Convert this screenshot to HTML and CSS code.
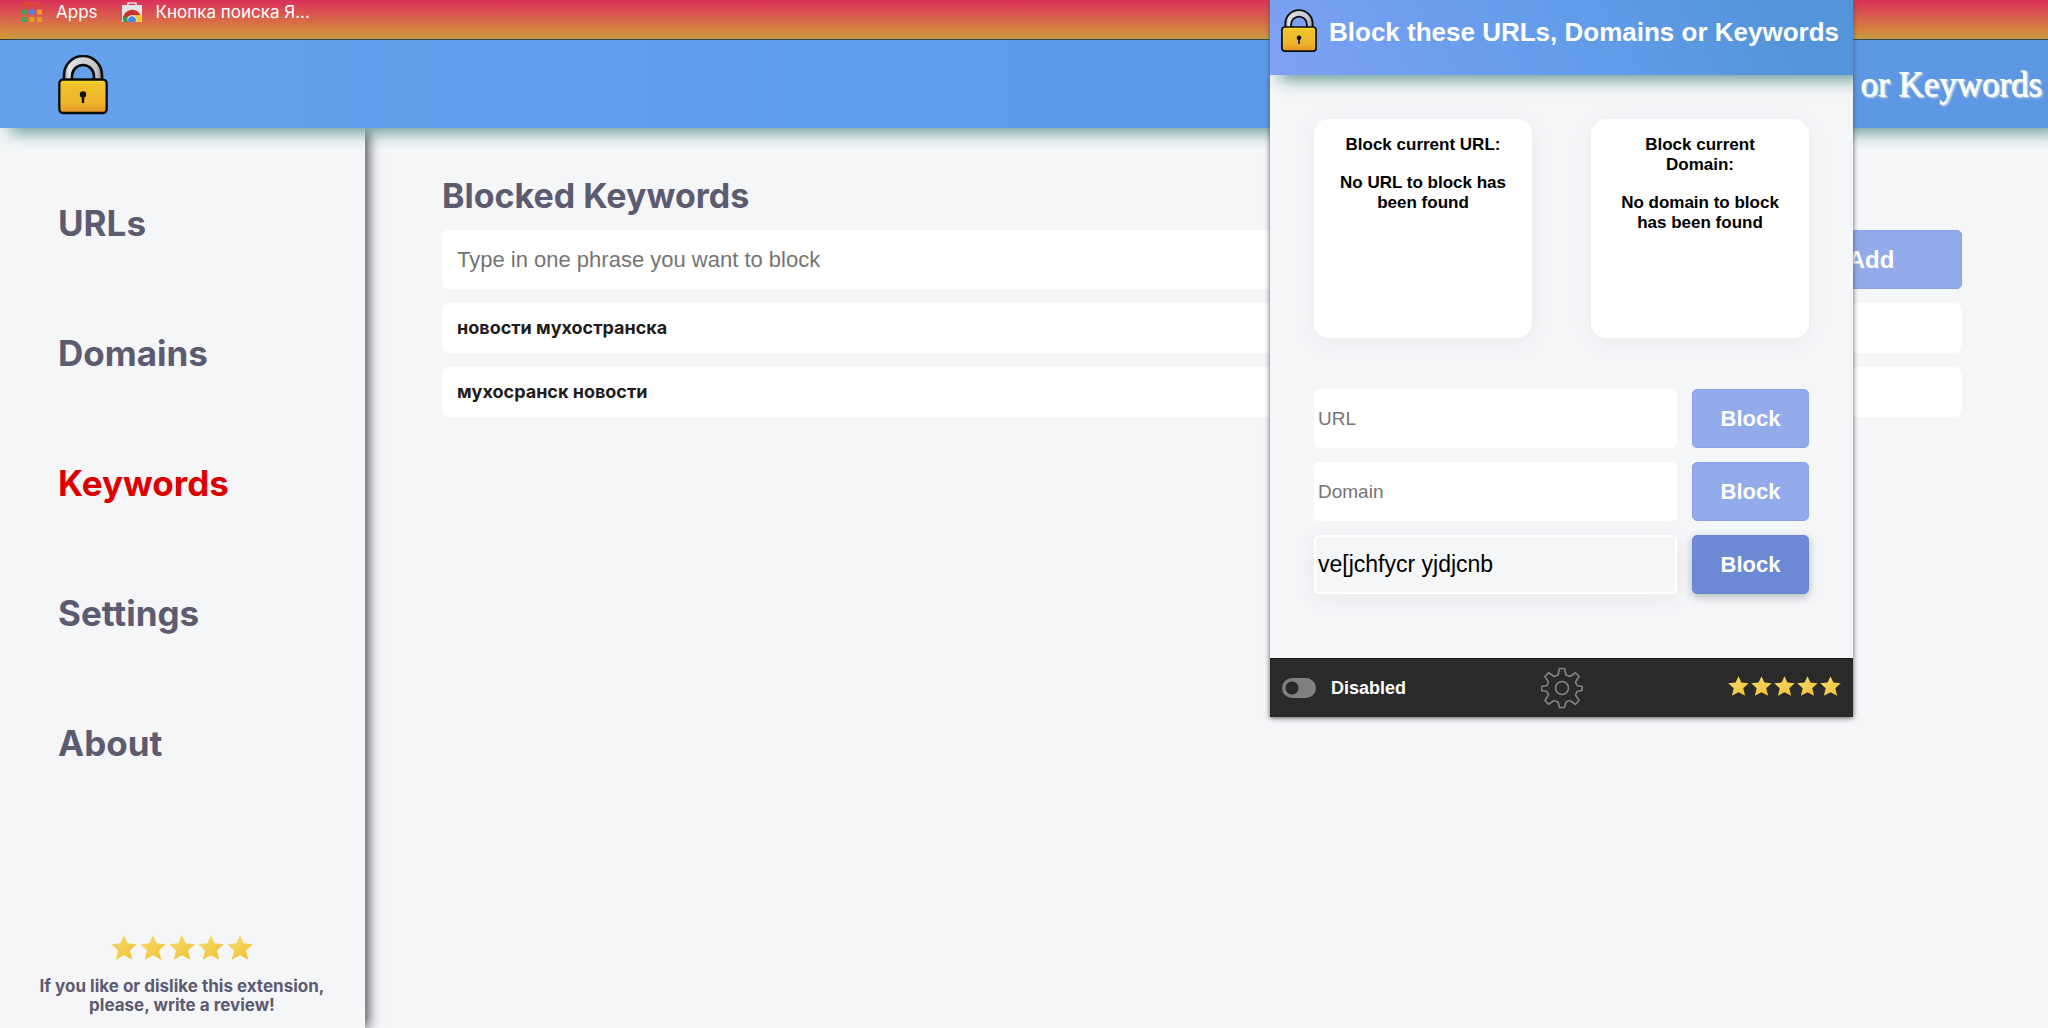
FILE: index.html
```html
<!DOCTYPE html>
<html lang="en">
<head>
<meta charset="utf-8">
<title>Block these URLs, Domains or Keywords</title>
<link rel="stylesheet" href="styles.css">
</head>
<body>
<svg class="defs" aria-hidden="true">
  <defs>
    <linearGradient id="gold" x1="0" y1="0" x2="0" y2="1"><stop offset="0" stop-color="#f5e02f"/><stop offset=".15" stop-color="#efc22c"/><stop offset=".7" stop-color="#edb42b"/><stop offset="1" stop-color="#e2932a"/></linearGradient>
    <linearGradient id="steel" x1="0" y1="0" x2="1" y2="0"><stop offset="0" stop-color="#8f9299"/><stop offset=".12" stop-color="#e2e3e6"/><stop offset=".5" stop-color="#d0d2d7"/><stop offset=".85" stop-color="#c4c6cc"/><stop offset="1" stop-color="#85888f"/></linearGradient>
    <linearGradient id="star-fill" x1="0" y1="0" x2="1" y2="1"><stop offset="0" stop-color="#f8dc72"/><stop offset="1" stop-color="#efc02f"/></linearGradient>
    <symbol id="lock" viewBox="0 0 50 60">
      <path d="M6 30V20a19 19 0 0 1 38 0V30H36V21a11 11 0 0 0-22 0V30z" fill="url(#steel)" stroke="#0c0c0c" stroke-width="2.600"/>
      <rect x="1.300" y="24.500" width="47.400" height="33.500" rx="4" fill="url(#gold)" stroke="#0c0c0c" stroke-width="2.300"/>
      <circle cx="25" cy="39.500" r="3.200" fill="#111"/>
      <path d="M23.800 41h2.400v7h-2.400z" fill="#111"/>
    </symbol>
    <symbol id="star" viewBox="0 0 26 25">
      <path d="M13 .2l3.600 8 9.200 1-6.800 6.200 2.300 9.400L13 20.200 4.700 24.800 7 15.400.2 9.200l9.200-1z" fill="url(#star-fill)"/>
    </symbol>
  </defs>
</svg>

<nav class="bookmarks" aria-label="Bookmarks">
  <a class="bookmark" href="#apps">
    <svg class="bookmark-icon" viewBox="0 0 20 20" aria-hidden="true">
      <path d="M0 0h5v5H0zM7.500 0h5v5h-5zM15 0h5v5h-5z" fill="#d8472f"/>
      <path d="M0 7.500h5v5H0z" fill="#4f9b5a"/><path d="M7.500 7.500h5v5h-5z" fill="#4285f4"/><path d="M15 7.500h5v5h-5z" fill="#dfa01e"/>
      <path d="M0 15h5v5H0z" fill="#4f9b5a"/><path d="M7.500 15h5v5h-5zM15 15h5v5h-5z" fill="#dfa01e"/>
    </svg>
    <span>Apps</span>
  </a>
  <a class="bookmark" href="#store">
    <svg class="bookmark-icon" viewBox="0 0 20 20" aria-hidden="true">
      <path d="M6 3V1h8v2" fill="none" stroke="#e3dfe1" stroke-width="1.500"/>
      <path d="M0 3h20v17H0z" fill="#e4e2e4"/>
      <path d="M1 17a9.200 9.200 0 0 1 17.500-4l-9 1z" fill="#c9302b"/>
      <path d="M1 14a9 9 0 0 0 .5 6H8l-2-4z" fill="#35994b"/>
      <path d="M12 13h7a9 9 0 0 1 0 7h-7z" fill="#f3cb2e"/>
      <circle cx="10" cy="17.500" r="4.600" fill="#e4e2e4"/>
      <path d="M6.400 20a4 4 0 1 1 7.200 0z" fill="#4b83e8"/>
    </svg>
    <span>Кнопка поиска Я...</span>
  </a>
</nav>

<header class="page-header">
  <svg class="page-lock" aria-hidden="true"><use href="#lock"/></svg>
  <h1 class="page-title">Block these URLs, Domains or Keywords</h1>
</header>

<div class="layout">
  <aside class="sidebar">
    <nav class="menu" aria-label="Options">
      <a class="menu-link" href="#urls">URLs</a>
      <a class="menu-link" href="#domains">Domains</a>
      <a class="menu-link menu-link-active" href="#keywords">Keywords</a>
      <a class="menu-link" href="#settings">Settings</a>
      <a class="menu-link" href="#about">About</a>
    </nav>
    <a class="review" href="#review">
      <span class="review-stars">
        <svg class="star"><use href="#star"/></svg><svg class="star"><use href="#star"/></svg><svg class="star"><use href="#star"/></svg><svg class="star"><use href="#star"/></svg><svg class="star"><use href="#star"/></svg>
      </span>
      <span>If you like or dislike this extension,<br>please, write a review!</span>
    </a>
  </aside>

  <main class="content">
    <h2 class="content-title">Blocked Keywords</h2>
    <form class="add-form">
      <input class="phrase-input" type="text" aria-label="Phrase to block" placeholder="Type in one phrase you want to block">
      <button class="button add-button" type="button">Add</button>
    </form>
    <ul class="keywords">
      <li class="keyword">новости мухостранска</li>
      <li class="keyword">мухосранск новости</li>
    </ul>
  </main>
</div>

<section class="popup" aria-label="Extension popup">
  <header class="popup-header">
    <svg class="popup-lock" aria-hidden="true"><use href="#lock"/></svg>
    <h2 class="popup-title">Block these URLs, Domains or Keywords</h2>
  </header>
  <div class="popup-body">
    <div class="cards">
      <article class="card">
        <h3 class="card-text">Block current URL:</h3>
        <p class="card-text">No URL to block has been found</p>
      </article>
      <article class="card">
        <h3 class="card-text">Block current Domain:</h3>
        <p class="card-text">No domain to block has been found</p>
      </article>
    </div>
    <form class="block-form">
      <input class="block-input" type="text" aria-label="URL" placeholder="URL">
      <button class="button" type="button">Block</button>
      <input class="block-input" type="text" aria-label="Domain" placeholder="Domain">
      <button class="button" type="button">Block</button>
      <input class="block-input block-input-active" type="text" aria-label="Keyword" value="ve[jchfycr yjdjcnb">
      <button class="button button-active" type="button">Block</button>
    </form>
  </div>
  <footer class="popup-footer">
    <label class="status"><input class="toggle" type="checkbox">Disabled</label>
    <a class="gear-link" href="#settings" aria-label="Settings">
      <svg class="gear" viewBox="0 0 42 42" aria-hidden="true">
        <g fill="none" stroke="#808080" stroke-width="1.700" stroke-linejoin="round">
          <path d="M18.500 1.500h5l1.500 6.500 4 1.500 5.300-3.800 3.800 3.800-3.600 5.500 1.500 3.500 5 1v4l-5 1-1.500 3.500 3.600 5.500-3.800 3.800-5.300-3.800-4 1.500-1.500 5.500h-5l-1.500-5.500-4-1.500-5.300 3.800-3.800-3.800 3.600-5.500-1.500-3.500-5.500-1v-4l5.500-1 1.500-3.500-3.600-5.500 3.800-3.800 5.300 3.800 4-1.500z"/>
          <circle cx="21" cy="21" r="6.500"/>
        </g>
      </svg>
    </a>
    <a class="footer-stars" href="#review" aria-label="Rate this extension">
      <svg class="star-small"><use href="#star"/></svg><svg class="star-small"><use href="#star"/></svg><svg class="star-small"><use href="#star"/></svg><svg class="star-small"><use href="#star"/></svg><svg class="star-small"><use href="#star"/></svg>
    </a>
  </footer>
</section>
</body>
</html>
```
FILE: styles.css
```css
*, *::before, *::after { box-sizing: border-box; }

body {
  margin: 0;
  min-height: 100vh;
  display: flex;
  flex-direction: column;
  position: relative;
  background: #f5f6f8;
  color: #5d5b72;
  font-family: Inter, "Noto Sans", sans-serif;
}

h1, h2, h3, p, ul { margin: 0; padding: 0; }
a { color: inherit; text-decoration: none; }
input, button { font-family: "Liberation Sans", Arial, sans-serif; }

.defs { position: absolute; width: 0; height: 0; }

/* Browser bookmarks */
.bookmarks {
  display: flex;
  gap: 24px;
  height: 40px;
  padding: 2px 22px;
  background: linear-gradient(#da2f5b, #d79c36);
  border-bottom: 1px solid #33302c;
}
.bookmark {
  display: flex;
  align-items: center;
  gap: 14px;
  height: 20px;
  color: #fff;
  font-size: 17px;
  line-height: 20px;
}
.bookmark-icon { width: 20px; height: 20px; }

/* Options page header */
.page-header {
  display: flex;
  align-items: center;
  justify-content: space-between;
  height: 88px;
  padding: 2px 6px 0 58px;
  position: relative;
  z-index: 2;
  background: linear-gradient(90deg, #66a1ec, #5b9bea 60%, #5e97e3);
  box-shadow: 10px 5px 15px #6c9b99;
}
.page-lock { width: 50px; height: 60px; }
.page-title {
  color: #fff;
  font: 400 35px/44px "Liberation Serif", "Times New Roman", serif;
  text-shadow: 1px 1px 1px #fff, 2px 2px 2px #d3d3d3;
}

.layout { display: flex; flex: 1; }

/* Sidebar */
.sidebar {
  display: flex;
  flex-direction: column;
  justify-content: space-between;
  flex: 0 0 365px;
  padding: 73px 0 13px;
  position: relative;
  z-index: 1;
  border-right: 1px solid #fff;
  background: #f5f6f8;
  box-shadow: 3px 0 12px #44444c;
}
.menu {
  display: flex;
  flex-direction: column;
  align-items: flex-start;
  gap: 86px;
  padding-left: 58px;
}
.menu-link { font-size: 35px; font-weight: 700; line-height: 44px; }
.menu-link-active { color: #dc0000; }
.review {
  display: flex;
  flex-direction: column;
  align-items: center;
  gap: 17px;
  font-size: 17px;
  font-weight: 700;
  line-height: 19px;
  text-align: center;
}
.review-stars { display: flex; gap: 3px; }
.star { width: 26px; height: 25px; }

/* Content */
.content { flex: 1; padding: 46px 86px 0 77px; }
.content-title { font-size: 34px; line-height: 44px; }
.add-form { display: flex; gap: 15px; margin-top: 12px; }
.phrase-input {
  flex: 1;
  min-width: 0;
  height: 59px;
  padding: 0 15px;
  border: 0;
  border-radius: 6px;
  background: #fff;
  font-size: 22px;
}
.keywords {
  display: grid;
  gap: 14px;
  margin-top: 14px;
  list-style: none;
}
.keyword {
  padding: 15px;
  border-radius: 7px;
  background: #fff;
  color: #231b1b;
  font-size: 18px;
  font-weight: 700;
  line-height: 20px;
}

.button {
  height: 59px;
  padding: 0;
  border: 1px solid #86a3ec;
  border-radius: 5px;
  background: #93abeb;
  color: #fff;
  font-size: 22px;
  font-weight: 700;
}
.button-active {
  border-color: #6a87d1;
  background: #6c89d3;
  box-shadow: 0 3px 8px #b4b6bc;
}
.add-button { width: 182px; font-size: 24px; }

/* Extension popup, shown over the page */
.popup {
  position: absolute;
  top: 0;
  right: 195px;
  z-index: 3;
  width: 583px;
  background: #f5f6f8;
  color: #000;
  font-family: "Liberation Sans", Arial, sans-serif;
  box-shadow: 0 1px 5px #55555a;
}
.popup-header {
  display: flex;
  align-items: flex-start;
  gap: 12px;
  height: 75px;
  padding: 9px 11px;
  background: linear-gradient(60deg, #7fa1f4, #6a9eed 35%, #5f9be8 60%, #5495d9 85%);
  box-shadow: 10px 5px 15px #6c9b99;
  clip-path: inset(0 0 -30px 0);
}
.popup-lock { width: 36px; height: 44px; flex: none; }
.popup-title { color: #fff; font-size: 26px; line-height: 46px; white-space: nowrap; }
.popup-body { padding: 44px 44px 64px; }
.cards { display: flex; justify-content: space-between; }
.card {
  display: grid;
  align-content: start;
  gap: 18px;
  width: 218px;
  min-height: 219px;
  padding: 16px 20px;
  border-radius: 15px;
  background: #fff;
  box-shadow: 0 4px 20px #e9eaed;
  text-align: center;
}
.card-text { font-size: 17px; font-weight: 700; line-height: 20px; }
.block-form {
  display: grid;
  grid-template-columns: 1fr 117px;
  gap: 14px 15px;
  margin-top: 51px;
}
.block-input {
  width: 100%;
  height: 59px;
  padding: 0 2px;
  border: 2px solid #fff;
  border-radius: 5px;
  background: #fff;
  font-size: 19px;
}
.block-input-active {
  background: #f5f6f8;
  font-size: 23px;
  box-shadow: 0 4px 20px #e6e7ea;
}
.popup-footer {
  display: grid;
  grid-template-columns: 1fr auto 1fr;
  align-items: center;
  height: 59px;
  padding: 0 12px;
  border-top: 1px solid #1c1c1c;
  background: #2a2a2a;
  color: #fff;
}
.status { display: flex; align-items: center; gap: 15px; font-size: 18px; font-weight: 700; }
.toggle {
  appearance: none;
  width: 34px;
  height: 20px;
  margin: 0;
  border-radius: 10px;
  background: radial-gradient(circle at 10px 10px, #2a2a2a 6px, #808080 7px);
}
.gear-link, .gear { display: block; width: 42px; height: 42px; }
.footer-stars { display: flex; justify-content: flex-end; gap: 2px; padding-bottom: 4px; }
.star-small { width: 21px; height: 20px; }
```
